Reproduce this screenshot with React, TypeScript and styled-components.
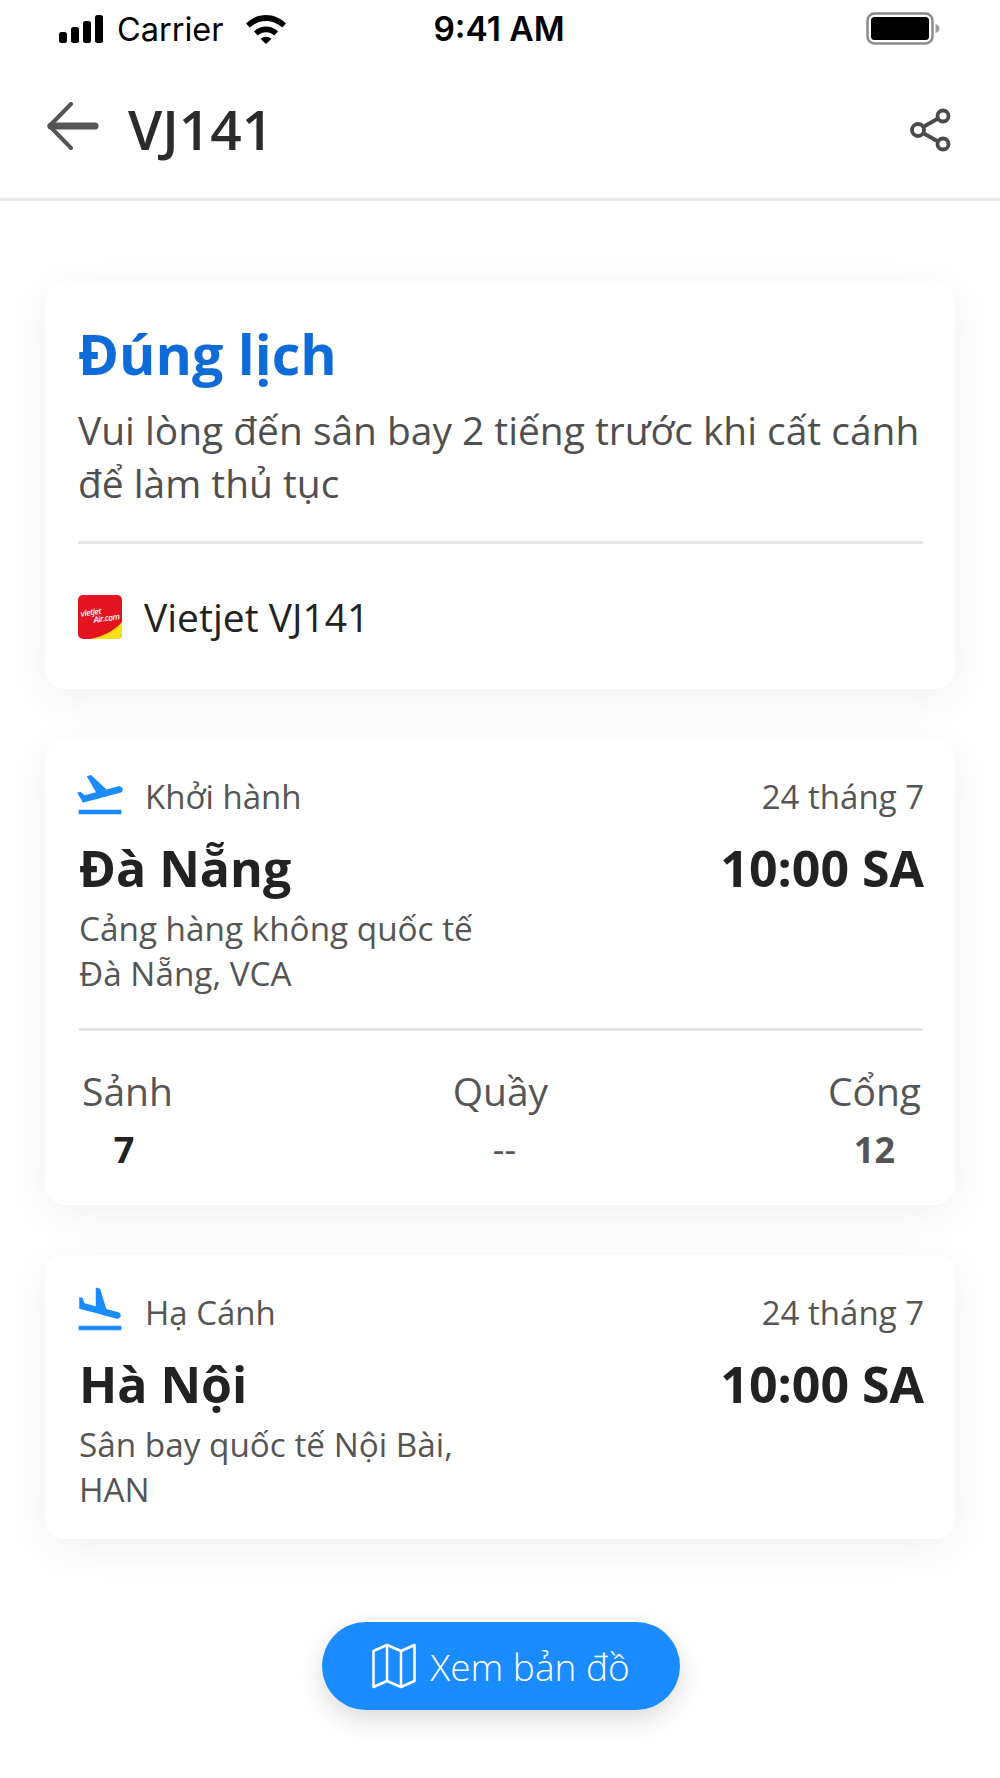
import styled, { createGlobalStyle } from 'styled-components'

const GlobalStyle = createGlobalStyle`
  html, body {
    margin: 0;
    padding: 0;
    background: #fff;
    font-family: 'Open Sans', 'Noto Sans', sans-serif;
  }
`

const Screen = styled.div`
  width: 1000px;
  height: 1778px;
  overflow: hidden;
  background: #fff;
  box-sizing: border-box;
`

const StatusBar = styled.div`
  height: 58px;
  padding: 0 58px;
  display: grid;
  grid-template-columns: 1fr auto 1fr;
  align-items: center;
  font-family: Inter, 'Liberation Sans', sans-serif;
  color: #000;
`

const StatusLeft = styled.div`
  display: flex;
  align-items: center;
  gap: 11px;
  font-size: 32.500px;
`

const WifiSlot = styled.div`
  margin-left: 10px;
  display: flex;
`

const StatusTime = styled.div`
  margin-right: 2px;
  font-size: 33.500px;
  font-weight: 600;
`

const StatusRight = styled.div`
  margin-right: 2px;
  display: flex;
  justify-content: flex-end;
`

const Header = styled.header`
  height: 140px;
  padding: 0 48px 0 46px;
  display: flex;
  align-items: center;
  border-bottom: 3px solid #e6e6e6;
  box-sizing: content-box;
`

const HeaderTitle = styled.h1`
  margin: 0 0 0 28px;
  flex: 1;
  font-size: 55px;
  font-weight: 600;
  color: #2b2b2b;
`

const ShareSlot = styled.div`
  margin-top: 4px;
  display: flex;
`

const Content = styled.main`
  padding: 80px 45px 0;
  display: flex;
  flex-direction: column;
  gap: 50px;
`

const Card = styled.section<{ $height: number }>`
  height: ${(p) => p.$height}px;
  padding: 0 32px 0 33px;
  box-sizing: border-box;
  background: #fff;
  border-radius: 20px;
  box-shadow: 0 10px 40px rgba(0, 0, 0, 0.06);
`

const FlightCard = styled(Card)`
  padding: 0 31px 0 35px;
`

const StatusTitle = styled.h2`
  margin: 0;
  padding-top: 37px;
  font-size: 55.500px;
  line-height: 72px;
  font-weight: 700;
  color: #0f6bd8;
`

const StatusText = styled.p`
  margin: 0;
  padding-top: 13px;
  font-size: 38.900px;
  line-height: 53px;
  color: #4f4f4f;
`

const Divider = styled.hr`
  margin: 0;
  border: none;
  height: 3px;
  background: #e6e6e6;
`

const StatusDivider = styled(Divider)`
  margin-top: 32px;
`

const AirlineRow = styled.div`
  margin-top: 51px;
  display: flex;
  align-items: center;
  gap: 22px;
  font-size: 39px;
  line-height: 44px;
  color: #222;
`

const AirlineLogo = styled.div`
  position: relative;
  width: 44px;
  height: 44px;
  border-radius: 5px;
  overflow: hidden;
  background: #e3141f;
  color: #fff;
  font-size: 8.500px;
  line-height: 8px;
  font-weight: 600;
  font-style: italic;
  letter-spacing: -0.5px;
  flex: none;
`

const LogoCorner = styled.svg`
  position: absolute;
  inset: 0;
  width: 44px;
  height: 44px;
`

const LogoText = styled.div`
  position: absolute;
  left: 3px;
  top: 12px;
  transform: rotate(-8deg);
  white-space: nowrap;
`

const LogoTextSub = styled.div`
  padding-left: 12px;
`

const FlightTop = styled.div`
  padding-top: 35px;
  display: flex;
  align-items: center;
  justify-content: space-between;
  height: 44px;
`

const Leg = styled.div`
  display: flex;
  align-items: center;
  gap: 18px;
  font-size: 33px;
  color: #555;
`

const LegIcon = styled.svg`
  width: 54px;
  height: 54px;
  margin: 0 0 4px -7px;
  fill: #1a8cff;
`

const LegDate = styled.div`
  font-size: 33px;
  color: #555;
`

const CityRow = styled.div`
  margin-top: 16px;
  margin-left: -1px;
  display: flex;
  justify-content: space-between;
  align-items: center;
  font-size: 50px;
  line-height: 68px;
  font-weight: 700;
  color: #222;
`

const AirportName = styled.div`
  margin-top: 4px;
  margin-left: -1px;
  width: 440px;
  font-size: 33.300px;
  line-height: 45px;
  color: #555;
`

const FlightDivider = styled(Divider)`
  margin: 32px 1px 0 -1px;
`

const InfoGrid = styled.div`
  margin-top: 34px;
  padding: 0 3px 0 2px;
  display: flex;
  justify-content: space-between;
`

const InfoCell = styled.div`
  text-align: center;
`

const InfoLabel = styled.div`
  font-size: 39px;
  line-height: 52px;
  color: #555;
`

const InfoValue = styled.div<{ $dark?: boolean; $light?: boolean; $nudge?: number }>`
  margin-top: 4px;
  padding-left: ${(p) => Math.max(p.$nudge ?? 0, 0)}px;
  padding-right: ${(p) => Math.max(-(p.$nudge ?? 0), 0)}px;
  font-size: 36px;
  line-height: 58px;
  font-weight: ${(p) => (p.$light ? 400 : 700)};
  color: ${(p) => (p.$dark ? '#222' : '#555')};
`

const MapButton = styled.button`
  margin: 83px 0 0 322px;
  display: flex;
  align-items: center;
  justify-content: center;
  gap: 14px;
  width: 358px;
  height: 88px;
  border: none;
  border-radius: 44px;
  background: #1a8cff;
  color: #fff;
  font-family: inherit;
  font-size: 37px;
  font-weight: 300;
  box-shadow: 0 10px 24px rgba(0, 0, 0, 0.14);
`

const flightTakeoff =
  'M2.5 19h19v2h-19zm19.57-9.36c-.21-.8-1.04-1.28-1.84-1.06L14.92 10l-6.9-6.43-1.93.51 4.14 7.17-4.97 1.33-1.97-1.54-1.45.39 2.59 4.49s7.12-1.9 16.57-4.43c.81-.23 1.28-1.05 1.07-1.85z'
const flightLand =
  'M2.5 19h19v2h-19zm7.18-5.73l4.35 1.16 5.31 1.42c.8.21 1.62-.26 1.84-1.06.21-.8-.26-1.62-1.06-1.84l-5.31-1.42-2.76-9.02L10.12 2v8.28L5.15 8.95l-.93-2.32-1.45-.39v5.17l1.6.43 5.31 1.43z'

const SignalIcon = () => (
  <svg width="48" height="28" viewBox="0 0 48 28">
    <rect x="1" y="17" width="8" height="11" rx="2.500" />
    <rect x="13" y="12" width="8" height="16" rx="2.500" />
    <rect x="25" y="6" width="8" height="22" rx="2.500" />
    <rect x="37" y="0" width="8" height="28" rx="2.500" />
  </svg>
)

const WifiIcon = () => (
  <svg width="42" height="30" viewBox="0 0 42 30">
    <path d="M1 9.500C6.500 4 13.500 1 21 1s14.500 3 20 8.500l-3.800 4.100C32.800 9.400 27 7 21 7S9.200 9.400 4.800 13.600z" />
    <path d="M9 17.500C12.400 14.300 16.500 12.500 21 12.500s8.600 1.800 12 5l-3.800 4C27 19.500 24 18.300 21 18.300s-6 1.200-8.200 3.200z" />
    <path d="M15.500 24.800c1.500-1.300 3.500-2 5.500-2s4 .7 5.500 2L21 30z" />
  </svg>
)

const BatteryIcon = () => (
  <svg width="74" height="34" viewBox="0 0 74 34">
    <rect x="1.500" y="1.500" width="65" height="30" rx="7" fill="none" stroke="#8a8a8a" strokeWidth="2.500" />
    <rect x="5" y="5" width="58" height="23" rx="3.500" fill="#000" />
    <path d="M69.500 12c2.500.6 4 2.500 4 4.500s-1.500 3.900-4 4.500z" fill="#9a9a9a" />
  </svg>
)

const BackIcon = () => (
  <svg width="54" height="52" viewBox="0 0 54 52" fill="none" stroke="#555">
    <path d="M25 2L3.500 24l21.500 22" strokeWidth="4" strokeLinecap="round" strokeLinejoin="round" />
    <path d="M5 24h44" strokeWidth="7" strokeLinecap="round" />
  </svg>
)

const ShareIcon = () => (
  <svg width="42" height="46" viewBox="0 0 42 44" fill="none" stroke="#4a4a4a" strokeWidth="3.800">
    <circle cx="33" cy="8" r="5.500" />
    <circle cx="8" cy="22" r="6" />
    <circle cx="33" cy="36" r="5.500" />
    <path d="M13 19L28 10.500M13 25l15 8.500" />
  </svg>
)

const MapIcon = () => (
  <svg width="44" height="46" viewBox="0 0 44 46" fill="none" stroke="#fff" strokeWidth="2.500" strokeLinejoin="round">
    <path d="M1.500 8L15 2l14 6 13.500-6v36L29 44l-14-6-13.500 6z" />
    <path d="M15 2v36M29 8v36" />
  </svg>
)

const FlightHead = ({ icon, label, city }: { icon: string; label: string; city: string }) => (
  <>
    <FlightTop>
      <Leg>
        <LegIcon viewBox="0 0 24 24">
          <path d={icon} />
        </LegIcon>
        {label}
      </Leg>
      <LegDate>24 tháng 7</LegDate>
    </FlightTop>
    <CityRow>
      <span>{city}</span>
      <span>10:00 SA</span>
    </CityRow>
  </>
)

const App = () => (
  <Screen>
    <GlobalStyle />
    <StatusBar>
      <StatusLeft>
        <SignalIcon />
        Carrier
        <WifiSlot>
          <WifiIcon />
        </WifiSlot>
      </StatusLeft>
      <StatusTime>9:41 AM</StatusTime>
      <StatusRight>
        <BatteryIcon />
      </StatusRight>
    </StatusBar>
    <Header>
      <BackIcon />
      <HeaderTitle>VJ141</HeaderTitle>
      <ShareSlot>
        <ShareIcon />
      </ShareSlot>
    </Header>
    <Content>
      <Card $height={408}>
        <StatusTitle>Đúng lịch</StatusTitle>
        <StatusText>
          Vui lòng đến sân bay 2 tiếng trước khi cất cánh
          <br />
          để làm thủ tục
        </StatusText>
        <StatusDivider />
        <AirlineRow>
          <AirlineLogo>
            <LogoCorner viewBox="0 0 44 44">
              <path d="M12 44C24 42 36 36 44 27v17z" fill="#f7e017" />
            </LogoCorner>
            <LogoText>
              vietjet
              <LogoTextSub>Air.com</LogoTextSub>
            </LogoText>
          </AirlineLogo>
          Vietjet VJ141
        </AirlineRow>
      </Card>
      <FlightCard $height={466}>
        <FlightHead icon={flightTakeoff} label="Khởi hành" city="Đà Nẵng" />
        <AirportName>
          Cảng hàng không quốc tế
          <br />
          Đà Nẵng, VCA
        </AirportName>
        <FlightDivider />
        <InfoGrid>
          <InfoCell>
            <InfoLabel>Sảnh</InfoLabel>
            <InfoValue $dark $nudge={-7}>7</InfoValue>
          </InfoCell>
          <InfoCell>
            <InfoLabel>Quầy</InfoLabel>
            <InfoValue $light $nudge={8}>--</InfoValue>
          </InfoCell>
          <InfoCell>
            <InfoLabel>Cổng</InfoLabel>
            <InfoValue>12</InfoValue>
          </InfoCell>
        </InfoGrid>
      </FlightCard>
      <FlightCard $height={284}>
        <FlightHead icon={flightLand} label="Hạ Cánh" city="Hà Nội" />
        <AirportName>
          Sân bay quốc tế Nội Bài,
          <br />
          HAN
        </AirportName>
      </FlightCard>
    </Content>
    <MapButton>
      <MapIcon />
      Xem bản đồ
    </MapButton>
  </Screen>
)

export default App
